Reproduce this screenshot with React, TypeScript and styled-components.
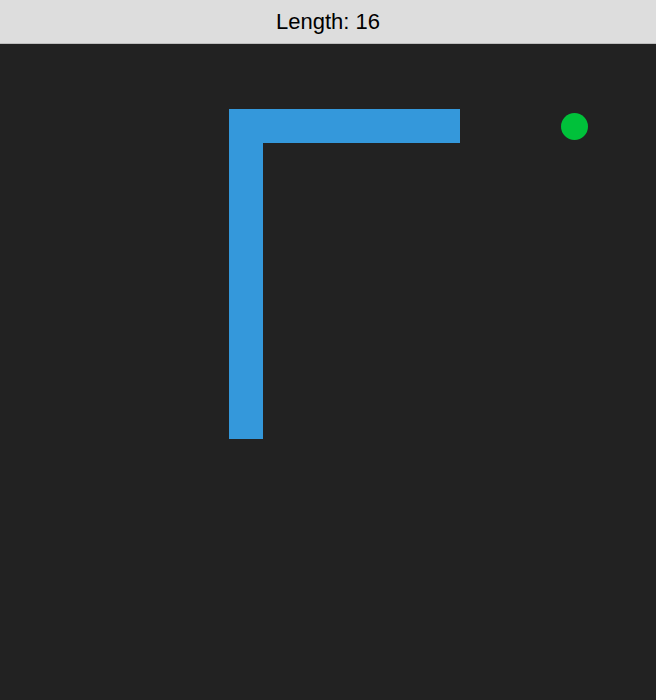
import React from "react";
import styled, { createGlobalStyle } from "styled-components";

const Global = createGlobalStyle`
  html, body { margin: 0; padding: 0; background: #222222; }
  body { font-family: "Liberation Sans", Arial, sans-serif; }
`;

const Page = styled.div`
  width: 656px;
  height: 700px;
  display: flex;
  flex-direction: column;
  background: #222222;
`;

const ScoreBar = styled.header`
  height: 43px;
  flex: none;
  background: #dddddd;
  border-bottom: 1px solid #bdbdbd;
  display: flex;
  align-items: center;
  justify-content: center;
  color: #000000;
  font-size: 22px;
`;

const Board = styled.div`
  width: 656px;
  height: 656px;
  display: grid;
  grid-template-columns: repeat(20, 32.8px);
  grid-template-rows: repeat(20, 32.8px);
  background: #222222;
`;

const Segment = styled.div<{ $col: number; $row: number }>`
  grid-column: ${(p) => p.$col + 1};
  grid-row: ${(p) => p.$row + 1};
  background: #3498db;
  box-shadow: 0 0 0 1px #3498db;
`;

const Food = styled.div<{ $col: number; $row: number }>`
  grid-column: ${(p) => p.$col + 1};
  grid-row: ${(p) => p.$row + 1};
  align-self: center;
  justify-self: center;
  width: 27px;
  height: 27px;
  margin: 1px 0 0 1px;
  border-radius: 50%;
  background: #00c13a;
`;

const snake: [number, number][] = [];
for (let c = 13; c >= 7; c--) snake.push([c, 2]);
for (let r = 3; r <= 11; r++) snake.push([7, r]);

export default function App() {
  return (
    <Page>
      <Global />
      <ScoreBar>Length: {snake.length}</ScoreBar>
      <Board>
        {snake.map(([c, r]) => (
          <Segment key={`${c}-${r}`} $col={c} $row={r} />
        ))}
        <Food $col={17} $row={2} />
      </Board>
    </Page>
  );
}
